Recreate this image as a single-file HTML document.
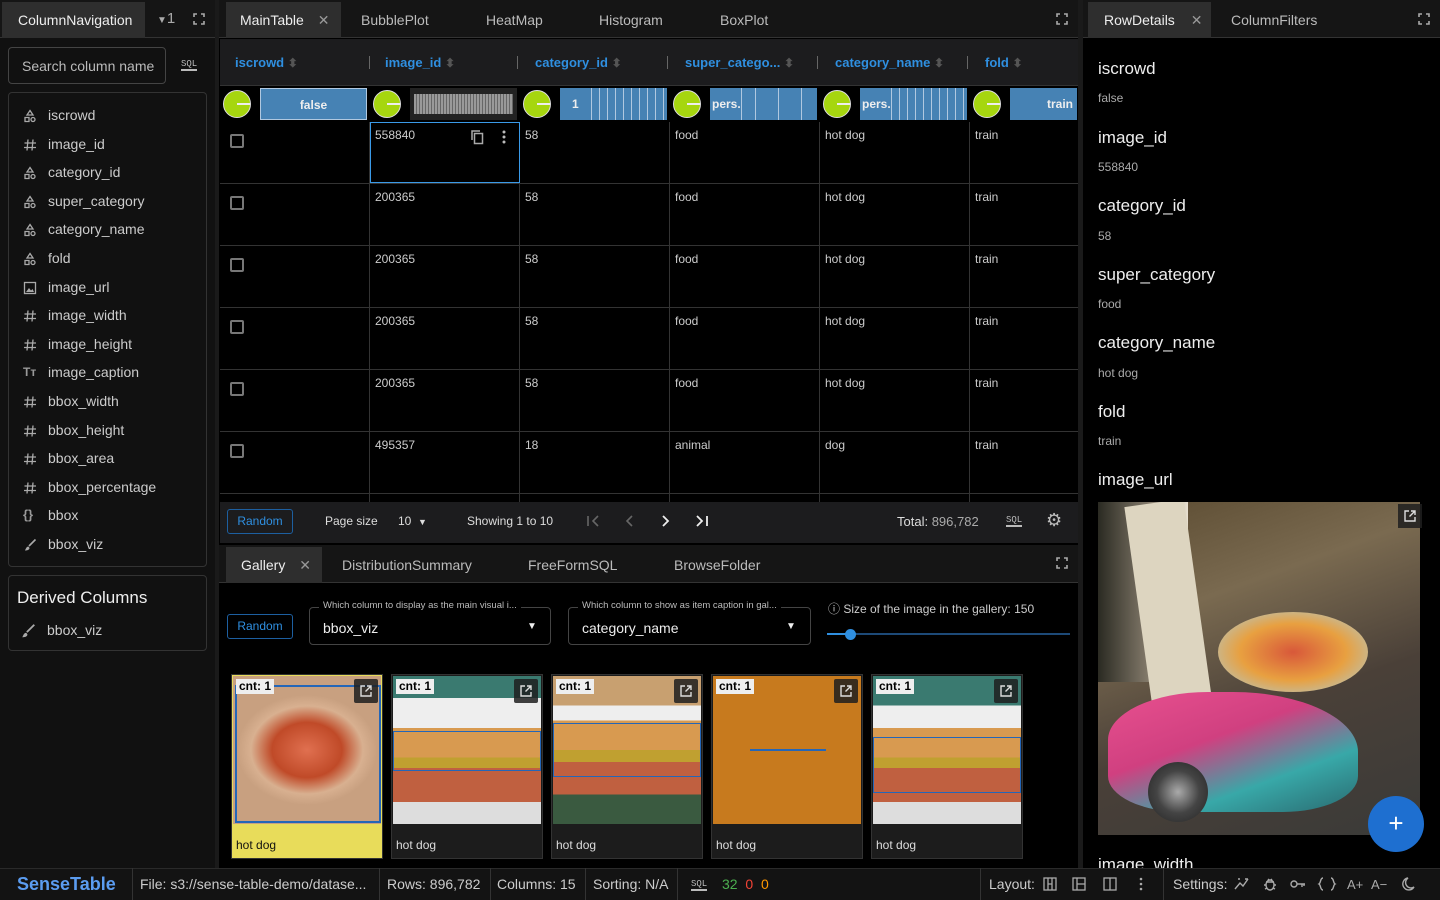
<!DOCTYPE html>
<html><head><meta charset="utf-8"><style>
*{box-sizing:border-box;margin:0;padding:0}
body{width:1440px;height:900px;background:#000;font-family:"Liberation Sans",sans-serif;color:#ddd;position:relative;overflow:hidden;font-size:13px}
.abs{position:absolute}
.tabbar{position:absolute;background:#151515;height:38px;border-bottom:1px solid #333}
.tab{position:absolute;top:2px;height:36px;line-height:36px;font-size:14px;color:#bbb;white-space:nowrap}
.tab.act{background:#2e2e2e;color:#eee}
.list div{height:28.6px;line-height:28.6px;font-size:14px;color:#ccc;padding-left:39px;position:relative}
.list div i{position:absolute;left:14px;top:7px;width:14px;height:14px;color:#999;font-style:normal;font-size:14px;line-height:14px}
.hdr{position:absolute;top:55px;color:#2f8fe0;font-weight:bold;font-size:13px;white-space:nowrap}
.hdr b{color:#555;font-size:12px}
.sep{position:absolute;top:56px;width:1px;height:13px;background:#666}
.cell{position:absolute;font-size:12px;color:#ccc}
.vl{position:absolute;width:1px;background:#333}
.hl{position:absolute;height:1px;background:#333}
.pie{position:absolute;width:28px;height:28px;border-radius:50%;background:#a6d60f;border:1px solid #ddd}
.pie:after{content:"";position:absolute;left:13px;top:12px;width:13px;height:2px;background:#eee}
.bar{position:absolute;top:88px;height:32px;background:#4682b4;color:#eee;font-weight:bold;font-size:12px;line-height:32px}
.cb{position:absolute;left:230px;width:14px;height:14px;border:2px solid #777;border-radius:2px}
.rdk{position:absolute;left:1098px;font-size:17px;color:#eee}
.rdv{position:absolute;left:1098px;font-size:12px;color:#aaa}
.gi{position:absolute;top:674px;width:152px;height:185px;background:#1c1c1c;border:1px solid #333}
.gi .im{position:absolute;left:1px;top:1px;width:148px;height:148px}
.gi .cap{position:absolute;left:4px;top:163px;font-size:12px;color:#ddd}
.gi .cnt{position:absolute;left:4px;top:4px;background:#eee;color:#000;font-size:12px;font-weight:bold;padding:0 3px;height:15px;line-height:15px}
.ex{position:absolute;right:4px;top:4px;width:24px;height:24px;background:rgba(30,30,30,.85);border-radius:2px}
.st{position:absolute;top:868px;height:32px;line-height:32px;font-size:14px;color:#ccc;white-space:nowrap}
</style></head><body>
<svg width="0" height="0" style="position:absolute"><defs>
<symbol id="shp" viewBox="0 0 14 14"><path d="M7 1.5L10 6H4z M2 8.5h4v4H2z" fill="none" stroke="#aaa" stroke-width="1.3"/><circle cx="10" cy="10.5" r="2" fill="none" stroke="#aaa" stroke-width="1.3"/></symbol>
<symbol id="hash" viewBox="0 0 14 14"><path d="M5 1.5L4 12.5M10 1.5L9 12.5M1.5 5H13M1 9.5h12" stroke="#aaa" stroke-width="1.3" fill="none"/></symbol>
<symbol id="imgi" viewBox="0 0 14 14"><rect x="1.5" y="1.5" width="11" height="11" fill="none" stroke="#aaa" stroke-width="1.3"/><path d="M3 11l3-4 2 2.5 1.5-1.5L11 11z" fill="#aaa"/></symbol>
<symbol id="brush" viewBox="0 0 14 14"><path d="M12.5 1.5L6 8" stroke="#aaa" stroke-width="1.6"/><path d="M5.5 8.5c-2 0-2.5 2-3.5 4 2 0 4.5-.5 4.5-2.5z" fill="#aaa"/></symbol>
<symbol id="max" viewBox="0 0 12 12"><path d="M1 4V1h3M8 1h3v3M11 8v3H8M4 11H1V8" fill="none" stroke="#aaa" stroke-width="1.6"/></symbol>
<symbol id="open" viewBox="0 0 14 14"><path d="M6 2H2v10h10V8M8 2h4v4M12 2L6.5 7.5" fill="none" stroke="#ddd" stroke-width="1.4"/></symbol>
</defs></svg>
<!-- left panel -->
<div class="abs" style="left:0;top:0;width:215px;height:868px;background:#111"></div>
<div class="tabbar" style="left:0;top:0;width:215px"></div>
<div class="tab act" style="left:2px;width:143px;padding-left:16px">ColumnNavigation</div>
<div class="abs" style="left:157px;top:10px;color:#aaa;font-size:15px"><span style="font-size:10px">▼</span>1</div>
<svg class="abs" style="left:193px;top:13px" width="12" height="12"><use href="#max"/></svg>
<div class="abs" style="left:8px;top:47px;width:158px;height:37px;border:1px solid #444;border-radius:4px;padding:10px 13px;font-size:14px;color:#bbb;white-space:nowrap;overflow:hidden">Search column name</div>
<div class="abs" style="left:181px;top:59px;font-size:9px;color:#bbb;border-bottom:2px solid #bbb;font-family:'Liberation Mono'">SQL</div>
<div class="abs list" style="left:8px;top:92px;width:199px;height:475px;border:1px solid #333;border-radius:4px;padding-top:8px">
<div><svg class="abs" style="left:14px;top:8px" width="14" height="14"><use href="#shp"/></svg>iscrowd</div>
<div><svg class="abs" style="left:14px;top:8px" width="14" height="14"><use href="#hash"/></svg>image_id</div>
<div><svg class="abs" style="left:14px;top:8px" width="14" height="14"><use href="#shp"/></svg>category_id</div>
<div><svg class="abs" style="left:14px;top:8px" width="14" height="14"><use href="#shp"/></svg>super_category</div>
<div><svg class="abs" style="left:14px;top:8px" width="14" height="14"><use href="#shp"/></svg>category_name</div>
<div><svg class="abs" style="left:14px;top:8px" width="14" height="14"><use href="#shp"/></svg>fold</div>
<div><svg class="abs" style="left:14px;top:8px" width="14" height="14"><use href="#imgi"/></svg>image_url</div>
<div><svg class="abs" style="left:14px;top:8px" width="14" height="14"><use href="#hash"/></svg>image_width</div>
<div><svg class="abs" style="left:14px;top:8px" width="14" height="14"><use href="#hash"/></svg>image_height</div>
<div><i style="font-weight:bold;font-size:12px">Tт</i>image_caption</div>
<div><svg class="abs" style="left:14px;top:8px" width="14" height="14"><use href="#hash"/></svg>bbox_width</div>
<div><svg class="abs" style="left:14px;top:8px" width="14" height="14"><use href="#hash"/></svg>bbox_height</div>
<div><svg class="abs" style="left:14px;top:8px" width="14" height="14"><use href="#hash"/></svg>bbox_area</div>
<div><svg class="abs" style="left:14px;top:8px" width="14" height="14"><use href="#hash"/></svg>bbox_percentage</div>
<div><i style="font-weight:bold;font-size:13px">{}</i>bbox</div>
<div><svg class="abs" style="left:14px;top:8px" width="14" height="14"><use href="#brush"/></svg>bbox_viz</div>
</div>
<div class="abs" style="left:8px;top:575px;width:199px;height:76px;border:1px solid #333;border-radius:4px"></div>
<div class="abs" style="left:17px;top:588px;font-size:17px;color:#eee">Derived Columns</div>
<svg class="abs" style="left:20px;top:623px" width="16" height="16" viewBox="0 0 14 14"><use href="#brush"/></svg>
<div class="abs" style="left:47px;top:622px;font-size:14px;color:#ccc">bbox_viz</div>
<!-- main -->
<div class="abs" style="left:215px;top:0;width:4px;height:868px;background:#1a1a1a"></div>
<div class="tabbar" style="left:219px;top:0;width:859px"></div>
<div class="tab act" style="left:226px;width:115px;padding-left:14px">MainTable <span style="color:#999;margin-left:10px">✕</span></div>
<div class="tab" style="left:361px">BubblePlot</div><div class="tab" style="left:486px">HeatMap</div><div class="tab" style="left:599px">Histogram</div><div class="tab" style="left:720px">BoxPlot</div>
<svg class="abs" style="left:1056px;top:13px" width="12" height="12"><use href="#max"/></svg>
<div class="abs" style="left:220px;top:39px;width:858px;height:47px;background:#1c1c1e;border-bottom:1px solid #333"></div>
<div class="hdr" style="left:235px">iscrowd <b>⬍</b></div>
<div class="sep" style="left:369px"></div><div class="hdr" style="left:385px">image_id <b>⬍</b></div>
<div class="sep" style="left:517px"></div><div class="hdr" style="left:535px">category_id <b>⬍</b></div>
<div class="sep" style="left:667px"></div><div class="hdr" style="left:685px">super_catego... <b>⬍</b></div>
<div class="sep" style="left:817px"></div><div class="hdr" style="left:835px">category_name <b>⬍</b></div>
<div class="sep" style="left:967px"></div><div class="hdr" style="left:985px">fold <b>⬍</b></div>
<div class="pie" style="left:223px;top:90px"></div><div class="bar" style="left:260px;width:107px;text-align:center;border:1px solid #b0c8e0">false</div>
<div class="pie" style="left:373px;top:90px"></div><div class="abs" style="left:410px;top:88px;width:107px;height:32px;background:#222"><div style="margin:6px 4px;height:20px;background:repeating-linear-gradient(90deg,#999 0 2px,#666 2px 3px)"></div></div>
<div class="pie" style="left:523px;top:90px"></div><div class="bar" style="left:560px;width:107px;background:repeating-linear-gradient(90deg,#4682b4 0 7px,#b0c8e0 7px 8px)"></div>
<div class="bar" style="left:560px;width:32px;padding-left:12px;border-right:1px solid #b0c8e0">1</div>
<div class="pie" style="left:673px;top:90px"></div><div class="bar" style="left:710px;width:107px;background:repeating-linear-gradient(90deg,#4682b4 0 22px,#b0c8e0 22px 23px)"></div><div class="bar" style="left:710px;width:32px;padding-left:2px;border-right:1px solid #b0c8e0">pers.</div>
<div class="pie" style="left:823px;top:90px"></div><div class="bar" style="left:860px;width:107px;background:repeating-linear-gradient(90deg,#4682b4 0 7px,#b0c8e0 7px 8px)"></div><div class="bar" style="left:860px;width:32px;padding-left:2px;border-right:1px solid #b0c8e0">pers.</div>
<div class="pie" style="left:973px;top:90px"></div><div class="bar" style="left:1010px;width:67px;text-align:right;padding-right:4px">train</div>
<!-- grid -->
<div class="vl" style="left:369px;top:122px;height:380px"></div><div class="vl" style="left:519px;top:122px;height:380px"></div><div class="vl" style="left:669px;top:122px;height:380px"></div><div class="vl" style="left:819px;top:122px;height:380px"></div><div class="vl" style="left:969px;top:122px;height:380px"></div>
<div class="hl" style="left:220px;top:183px;width:858px"></div><div class="hl" style="left:220px;top:245px;width:858px"></div><div class="hl" style="left:220px;top:307px;width:858px"></div><div class="hl" style="left:220px;top:369px;width:858px"></div><div class="hl" style="left:220px;top:431px;width:858px"></div><div class="hl" style="left:220px;top:493px;width:858px"></div>
<div class="abs" style="left:370px;top:122px;width:150px;height:61px;border:1px solid #3a9ae8"></div>
<svg class="abs" style="left:469px;top:129px" width="16" height="16" viewBox="0 0 16 16"><path d="M3 11V2h8" fill="none" stroke="#aaa" stroke-width="1.5"/><rect x="5.5" y="4.5" width="8" height="10" fill="none" stroke="#aaa" stroke-width="1.5"/></svg>
<svg class="abs" style="left:502px;top:130px" width="4" height="14"><circle cx="2" cy="2" r="1.5" fill="#bbb"/><circle cx="2" cy="7" r="1.5" fill="#bbb"/><circle cx="2" cy="12" r="1.5" fill="#bbb"/></svg>
<div class="cb" style="top:134px"></div><div class="cb" style="top:196px"></div><div class="cb" style="top:258px"></div><div class="cb" style="top:320px"></div><div class="cb" style="top:382px"></div><div class="cb" style="top:444px"></div>
<div class="cell" style="left:375px;top:128px">558840</div><div class="cell" style="left:525px;top:128px">58</div><div class="cell" style="left:675px;top:128px">food</div><div class="cell" style="left:825px;top:128px">hot dog</div><div class="cell" style="left:975px;top:128px">train</div>
<div class="cell" style="left:375px;top:190px">200365</div><div class="cell" style="left:525px;top:190px">58</div><div class="cell" style="left:675px;top:190px">food</div><div class="cell" style="left:825px;top:190px">hot dog</div><div class="cell" style="left:975px;top:190px">train</div>
<div class="cell" style="left:375px;top:252px">200365</div><div class="cell" style="left:525px;top:252px">58</div><div class="cell" style="left:675px;top:252px">food</div><div class="cell" style="left:825px;top:252px">hot dog</div><div class="cell" style="left:975px;top:252px">train</div>
<div class="cell" style="left:375px;top:314px">200365</div><div class="cell" style="left:525px;top:314px">58</div><div class="cell" style="left:675px;top:314px">food</div><div class="cell" style="left:825px;top:314px">hot dog</div><div class="cell" style="left:975px;top:314px">train</div>
<div class="cell" style="left:375px;top:376px">200365</div><div class="cell" style="left:525px;top:376px">58</div><div class="cell" style="left:675px;top:376px">food</div><div class="cell" style="left:825px;top:376px">hot dog</div><div class="cell" style="left:975px;top:376px">train</div>
<div class="cell" style="left:375px;top:438px">495357</div><div class="cell" style="left:525px;top:438px">18</div><div class="cell" style="left:675px;top:438px">animal</div><div class="cell" style="left:825px;top:438px">dog</div><div class="cell" style="left:975px;top:438px">train</div>
<!-- footer -->
<div class="abs" style="left:220px;top:502px;width:858px;height:41px;background:#1c1c1e"></div>
<div class="abs" style="left:227px;top:509px;width:66px;height:25px;border:1px solid #1d5fa0;border-radius:3px;color:#2f8fe0;font-size:12px;text-align:center;line-height:23px">Random</div>
<div class="abs" style="left:325px;top:514px;font-size:12px;color:#ddd">Page size</div>
<div class="abs" style="left:398px;top:514px;font-size:12px;color:#ddd">10 &nbsp;<span style="font-size:9px">▼</span></div>
<div class="abs" style="left:467px;top:514px;font-size:12px;color:#ddd">Showing 1 to 10</div>
<svg class="abs" style="left:586px;top:514px" width="125" height="14" viewBox="0 0 125 14"><path d="M2 2v10M12 2l-5 5 5 5" fill="none" stroke="#666" stroke-width="1.6"/><path d="M46 2l-5 5 5 5" fill="none" stroke="#666" stroke-width="1.6"/><path d="M77 2l5 5-5 5" fill="none" stroke="#eee" stroke-width="1.8"/><path d="M111 2l5 5-5 5M121 2v10" fill="none" stroke="#eee" stroke-width="1.8"/></svg>
<div class="abs" style="left:897px;top:514px;font-size:13px;color:#ddd">Total: <span style="color:#aaa">896,782</span></div>
<div class="abs" style="left:1006px;top:515px;font-size:9px;color:#bbb;border-bottom:2px solid #bbb;font-family:'Liberation Mono'">SQL</div>
<div class="abs" style="left:1046px;top:510px;font-size:18px;color:#bbb">⚙</div>
<div class="tabbar" style="left:219px;top:545px;width:859px"></div>
<div class="tab act" style="left:226px;top:547px;width:96px;padding-left:15px">Gallery <span style="color:#999;margin-left:10px">✕</span></div>
<div class="tab" style="left:342px;top:547px">DistributionSummary</div><div class="tab" style="left:528px;top:547px">FreeFormSQL</div><div class="tab" style="left:674px;top:547px">BrowseFolder</div>
<svg class="abs" style="left:1056px;top:557px" width="12" height="12"><use href="#max"/></svg>
<div class="abs" style="left:227px;top:614px;width:66px;height:25px;border:1px solid #1d5fa0;border-radius:3px;color:#2f8fe0;font-size:12px;text-align:center;line-height:23px">Random</div>
<div class="abs" style="left:309px;top:607px;width:242px;height:38px;border:1px solid #444;border-radius:4px"></div>
<div class="abs" style="left:319px;top:600px;background:#000;padding:0 4px;font-size:9.5px;color:#bbb">Which column to display as the main visual i...</div>
<div class="abs" style="left:323px;top:620px;font-size:14px;color:#eee">bbox_viz</div><div class="abs" style="left:527px;top:621px;font-size:10px;color:#eee">▼</div>
<div class="abs" style="left:568px;top:607px;width:243px;height:38px;border:1px solid #444;border-radius:4px"></div>
<div class="abs" style="left:578px;top:600px;background:#000;padding:0 4px;font-size:9.5px;color:#bbb">Which column to show as item caption in gal...</div>
<div class="abs" style="left:582px;top:620px;font-size:14px;color:#eee">category_name</div><div class="abs" style="left:786px;top:621px;font-size:10px;color:#eee">▼</div>
<div class="abs" style="left:828px;top:600px;font-size:12px;color:#ccc">ⓘ Size of the image in the gallery: 150</div>
<div class="abs" style="left:827px;top:633px;width:243px;height:2px;background:#1d4a78"></div>
<div class="abs" style="left:827px;top:633px;width:22px;height:2px;background:#2f8fe0"></div>
<div class="abs" style="left:845px;top:629px;width:11px;height:11px;border-radius:50%;background:#2f8fe0"></div>
<!-- gallery -->
<div class="gi" style="left:231px;background:#e8dc5a"><div class="im" style="background:radial-gradient(ellipse 70px 55px at 50% 50%,#e07050,#c04a28 50%,#d8b090 80%,#c8a080)"></div><div class="abs" style="left:3px;top:10px;width:146px;height:138px;border:2px solid #2466b8"></div><div class="cnt">cnt: 1</div><div class="ex"><svg style="margin:5px" width="14" height="14"><use href="#open"/></svg></div><div class="cap" style="color:#111">hot dog</div></div>
<div class="gi" style="left:391px"><div class="im" style="background:linear-gradient(180deg,#3a7a70 0 15%,#eee 15% 35%,#d89a50 35% 55%,#c0a030 55% 62%,#c06040 62% 85%,#ddd 85%)"></div><div class="abs" style="left:1px;top:56px;width:148px;height:40px;border:1.5px solid #2466b8"></div><div class="cnt">cnt: 1</div><div class="ex"><svg style="margin:5px" width="14" height="14"><use href="#open"/></svg></div><div class="cap">hot dog</div></div>
<div class="gi" style="left:551px"><div class="im" style="background:linear-gradient(180deg,#c8a070 0 20%,#eee 20% 30%,#d89a50 30% 50%,#c0a030 50% 58%,#c06040 58% 80%,#3a5a40 80%)"></div><div class="abs" style="left:1px;top:48px;width:148px;height:54px;border:1.5px solid #2466b8"></div><div class="cnt">cnt: 1</div><div class="ex"><svg style="margin:5px" width="14" height="14"><use href="#open"/></svg></div><div class="cap">hot dog</div></div>
<div class="gi" style="left:711px"><div class="im" style="background:#c77a1e"></div><div class="abs" style="left:38px;top:74px;width:76px;height:2px;background:#2466b8"></div><div class="cnt">cnt: 1</div><div class="ex"><svg style="margin:5px" width="14" height="14"><use href="#open"/></svg></div><div class="cap">hot dog</div></div>
<div class="gi" style="left:871px"><div class="im" style="background:linear-gradient(180deg,#3a7a70 0 20%,#eee 20% 35%,#d89a50 35% 55%,#c0a030 55% 62%,#c06040 62% 85%,#ddd 85%)"></div><div class="abs" style="left:1px;top:62px;width:148px;height:56px;border:1.5px solid #2466b8"></div><div class="cnt">cnt: 1</div><div class="ex"><svg style="margin:5px" width="14" height="14"><use href="#open"/></svg></div><div class="cap">hot dog</div></div>
<!-- right -->
<div class="abs" style="left:1078px;top:0;width:5px;height:868px;background:#1a1a1a"></div>
<div class="tabbar" style="left:1083px;top:0;width:357px"></div>
<div class="tab act" style="left:1088px;width:123px;padding-left:16px">RowDetails <span style="color:#999;margin-left:12px">✕</span></div>
<div class="tab" style="left:1231px">ColumnFilters</div>
<svg class="abs" style="left:1418px;top:13px" width="12" height="12"><use href="#max"/></svg>
<div class="rdk" style="top:59px">iscrowd</div><div class="rdv" style="top:91px">false</div>
<div class="rdk" style="top:128px">image_id</div><div class="rdv" style="top:160px">558840</div>
<div class="rdk" style="top:196px">category_id</div><div class="rdv" style="top:229px">58</div>
<div class="rdk" style="top:265px">super_category</div><div class="rdv" style="top:297px">food</div>
<div class="rdk" style="top:333px">category_name</div><div class="rdv" style="top:366px">hot dog</div>
<div class="rdk" style="top:402px">fold</div><div class="rdv" style="top:434px">train</div>
<div class="rdk" style="top:470px">image_url</div>
<div class="abs" style="left:1098px;top:502px;width:322px;height:333px;overflow:hidden;background:linear-gradient(160deg,#5a4a30,#7a6a50 30%,#4a4038 60%,#3a3a38 100%)">
<div class="abs" style="left:0;top:0;width:90px;height:180px;background:linear-gradient(90deg,#2a2a22,#8a8070 60%,#e8e0d0)"></div>
<div class="abs" style="left:40px;top:0;width:60px;height:200px;background:#ddd5c0;transform:rotate(-8deg)"></div>
<div class="abs" style="left:10px;top:190px;width:250px;height:120px;border-radius:40% 50% 30% 30%;background:linear-gradient(160deg,#e8508f,#d04080 40%,#38a8a8 70%,#2a6a70)"></div>
<div class="abs" style="left:120px;top:110px;width:150px;height:80px;border-radius:50%;background:radial-gradient(ellipse,#d8583a,#e8a040 50%,#c8b890 75%,transparent 76%)"></div>
<div class="abs" style="left:50px;top:260px;width:60px;height:60px;border-radius:50%;background:radial-gradient(#aaa,#444 50%,#222)"></div>
</div>
<div class="abs" style="left:1398px;top:504px;width:24px;height:24px;background:rgba(30,30,30,.85)"><svg style="margin:5px" width="14" height="14"><use href="#open"/></svg></div>
<div class="rdk" style="top:855px">image_width</div>
<div class="abs" style="left:1368px;top:796px;width:56px;height:56px;border-radius:50%;background:#1e6fd0;color:#fff;font-size:26px;text-align:center;line-height:54px">+</div>
<!-- status -->
<div class="abs" style="left:0;top:868px;width:1440px;height:32px;background:#131313;border-top:1px solid #2a2a2a"></div>
<div class="st" style="left:17px;color:#5b9cf0;font-weight:bold;font-size:18px">SenseTable</div>
<div class="vl" style="left:132px;top:868px;height:32px"></div>
<div class="st" style="left:140px">File: s3://sense-table-demo/datase...</div>
<div class="vl" style="left:379px;top:868px;height:32px"></div>
<div class="st" style="left:387px">Rows: 896,782</div>
<div class="vl" style="left:490px;top:868px;height:32px"></div>
<div class="st" style="left:497px">Columns: 15</div>
<div class="vl" style="left:585px;top:868px;height:32px"></div>
<div class="st" style="left:593px">Sorting: N/A</div>
<div class="vl" style="left:677px;top:868px;height:32px"></div>
<div class="abs" style="left:691px;top:879px;font-size:9px;color:#bbb;border-bottom:2px solid #bbb;font-family:'Liberation Mono'">SQL</div>
<div class="st" style="left:722px"><span style="color:#4caf50">32</span>&nbsp; <span style="color:#f44336">0</span>&nbsp; <span style="color:#ff9800">0</span></div>
<div class="vl" style="left:980px;top:868px;height:32px"></div>
<div class="st" style="left:989px">Layout:</div>
<svg class="abs" style="left:1043px;top:877px" width="110" height="14" viewBox="0 0 110 14"><g fill="none" stroke="#aaa" stroke-width="1.3"><rect x="1" y="1" width="12" height="12"/><path d="M5 1v12M9 1v12M5 7h4"/><rect x="30" y="1" width="12" height="12"/><path d="M34 1v12M34 7h8"/><rect x="61" y="1" width="12" height="12"/><path d="M67 1v12"/></g><g fill="#aaa"><circle cx="98" cy="2" r="1.3"/><circle cx="98" cy="7" r="1.3"/><circle cx="98" cy="12" r="1.3"/></g></svg>
<div class="vl" style="left:1163px;top:868px;height:32px"></div>
<div class="st" style="left:1173px">Settings:</div>
<svg class="abs" style="left:1234px;top:876px" width="190" height="16" viewBox="0 0 190 16"><g fill="none" stroke="#aaa" stroke-width="1.4"><path d="M1 13l5-6 3 3 5-7M11 3h3M4 3h2"/><ellipse cx="36" cy="9" rx="4" ry="5"/><path d="M32 6h8M30 9h2M40 9h2M31 13l2-1M41 13l-2-1M34 3l1 1M38 3l-1 1"/><circle cx="60" cy="8" r="3"/><path d="M63 8h8M68 8v3M70 8v2"/><path d="M89 2c-3 0-2 5-4 6 2 1 1 6 4 6M97 2c3 0 2 5 4 6-2 1-1 6-4 6"/></g><text x="113" y="13" fill="#aaa" font-size="13" font-family="Liberation Sans">A+</text><text x="137" y="13" fill="#aaa" font-size="13" font-family="Liberation Sans">A−</text><path d="M174 2a6 6 0 1 0 6 9a5 5 0 0 1-6-9z" fill="none" stroke="#aaa" stroke-width="1.4"/></svg>
</body></html>
